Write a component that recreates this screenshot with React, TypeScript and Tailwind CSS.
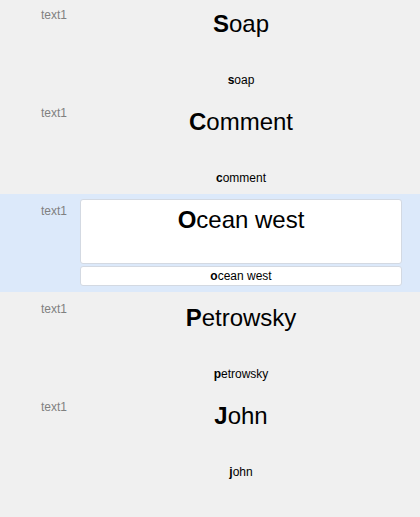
import React from "react";

const rows = [
  { title: "Soap", sub: "soap" },
  { title: "Comment", sub: "comment" },
  { title: "Ocean west", sub: "ocean west", selected: true },
  { title: "Petrowsky", sub: "petrowsky" },
  { title: "John", sub: "john" },
];

function Split({ text }: { text: string }) {
  return (
    <>
      <span className="font-bold">{text.charAt(0)}</span>
      {text.slice(1)}
    </>
  );
}

export default function App() {
  return (
    <div
      className="w-[420px] h-[517px] bg-[#f0f0f0] overflow-hidden"
      style={{ fontFamily: '"Liberation Sans", Arial, sans-serif' }}
    >
      <div className="-mt-[2px] flex flex-col">
        {rows.map((r, i) => (
          <div
            key={i}
            className={`flex h-[98px] pt-[5px] pr-[18px] ${r.selected ? "bg-[#dce9fa]" : ""}`}
          >
            <div className="w-[80px] shrink-0 pl-[41px] pt-[5px] text-[12px] leading-[14px] text-[#808080]">
              text1
            </div>
            <div className="flex-1 flex flex-col gap-[2px]">
              <div
                className={`h-[65px] rounded-[3px] border pt-[6px] text-center text-[24px] leading-[28px] text-black ${
                  r.selected ? "bg-white border-[#d3d9e2]" : "border-transparent"
                }`}
              >
                <Split text={r.title} />
              </div>
              <div
                className={`h-[20px] rounded-[3px] border pt-[2px] text-center text-[12px] leading-[14px] text-black ${
                  r.selected ? "bg-white border-[#d3d9e2]" : "border-transparent"
                }`}
              >
                <Split text={r.sub} />
              </div>
            </div>
          </div>
        ))}
      </div>
    </div>
  );
}
